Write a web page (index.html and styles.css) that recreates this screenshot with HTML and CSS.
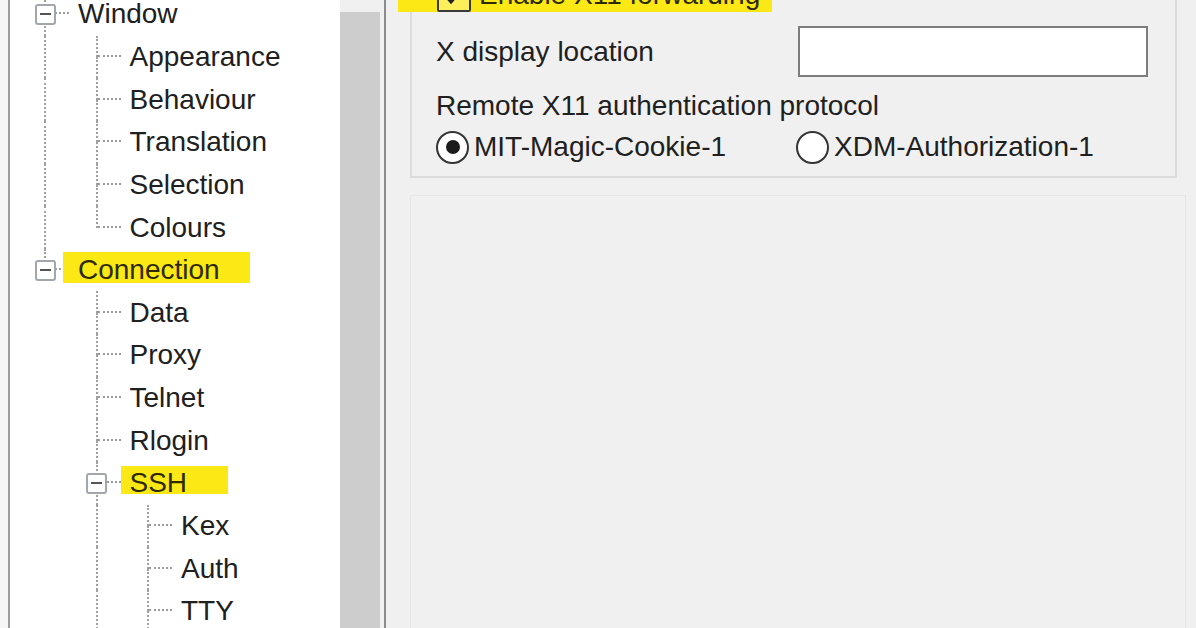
FILE: index.html
```html
<!DOCTYPE html>
<html>
<head>
<meta charset="utf-8">
<title>PuTTY Configuration - X11</title>
<link rel="stylesheet" href="styles.css">
</head>
<body>
<div class="dialog">
  <div class="edge"></div>
  <div class="tree-box">
    <div class="tree">
      <div class="row">
        <div class="conn"><i class="q-tl"></i><i class="q-bl"></i><i class="q-tr"></i><b class="exp"></b></div>
        <span class="label">Window</span>
      </div>
      <div class="row">
        <div class="indent on"></div>
        <div class="conn"><i class="q-tl"></i><i class="q-bl"></i><i class="q-tr"></i></div>
        <span class="label">Appearance</span>
      </div>
      <div class="row">
        <div class="indent on"></div>
        <div class="conn"><i class="q-tl"></i><i class="q-bl"></i><i class="q-tr"></i></div>
        <span class="label">Behaviour</span>
      </div>
      <div class="row">
        <div class="indent on"></div>
        <div class="conn"><i class="q-tl"></i><i class="q-bl"></i><i class="q-tr"></i></div>
        <span class="label">Translation</span>
      </div>
      <div class="row">
        <div class="indent on"></div>
        <div class="conn"><i class="q-tl"></i><i class="q-bl"></i><i class="q-tr"></i></div>
        <span class="label">Selection</span>
      </div>
      <div class="row">
        <div class="indent on"></div>
        <div class="conn"><i class="q-tl"></i><i class="q-tr"></i></div>
        <span class="label">Colours</span>
      </div>
      <div class="row">
        <div class="conn"><i class="q-tl"></i><i class="q-tr"></i><b class="exp"></b></div>
        <span class="label hl hl-conn">Connection</span>
      </div>
      <div class="row">
        <div class="indent"></div>
        <div class="conn"><i class="q-tl"></i><i class="q-bl"></i><i class="q-tr"></i></div>
        <span class="label">Data</span>
      </div>
      <div class="row">
        <div class="indent"></div>
        <div class="conn"><i class="q-tl"></i><i class="q-bl"></i><i class="q-tr"></i></div>
        <span class="label">Proxy</span>
      </div>
      <div class="row">
        <div class="indent"></div>
        <div class="conn"><i class="q-tl"></i><i class="q-bl"></i><i class="q-tr"></i></div>
        <span class="label">Telnet</span>
      </div>
      <div class="row">
        <div class="indent"></div>
        <div class="conn"><i class="q-tl"></i><i class="q-bl"></i><i class="q-tr"></i></div>
        <span class="label">Rlogin</span>
      </div>
      <div class="row">
        <div class="indent"></div>
        <div class="conn"><i class="q-tl"></i><i class="q-bl"></i><i class="q-tr"></i><b class="exp"></b></div>
        <span class="label hl hl-ssh">SSH</span>
      </div>
      <div class="row">
        <div class="indent"></div>
        <div class="indent on"></div>
        <div class="conn"><i class="q-tl"></i><i class="q-bl"></i><i class="q-tr"></i></div>
        <span class="label">Kex</span>
      </div>
      <div class="row">
        <div class="indent"></div>
        <div class="indent on"></div>
        <div class="conn"><i class="q-tl"></i><i class="q-bl"></i><i class="q-tr"></i></div>
        <span class="label">Auth</span>
      </div>
      <div class="row">
        <div class="indent"></div>
        <div class="indent on"></div>
        <div class="conn"><i class="q-tl"></i><i class="q-bl"></i><i class="q-tr"></i></div>
        <span class="label">TTY</span>
      </div>
      <div class="row">
        <div class="indent"></div>
        <div class="indent on"></div>
        <div class="conn"><i class="q-tl"></i><i class="q-bl"></i><i class="q-tr"></i></div>
        <span class="label hl hl-x11row">X11</span>
      </div>
    </div>
    <div class="scrollbar"><div class="thumb"></div></div>
  </div>
  <div class="panel">
    <div class="group">
      <div class="row-check">
        <label class="hl hl-x11">
          <span class="checkbox"><svg width="30" height="30" viewBox="0 0 30 30"><path d="M6 15 L12 22 L24 8" fill="none" stroke="#222" stroke-width="3"/></svg></span>
          <span>Enable X11 forwarding</span>
        </label>
      </div>
      <div class="row-display">
        <span>X display location</span>
        <span class="input"></span>
      </div>
      <div class="row-label">Remote X11 authentication protocol</div>
      <div class="row-radios">
        <span class="opt first"><span class="radio on"></span>MIT-Magic-Cookie-1</span>
        <span class="opt"><span class="radio"></span>XDM-Authorization-1</span>
      </div>
    </div>
    <div class="group2"></div>
  </div>
</div>
</body>
</html>
```

FILE: styles.css
```css
html, body {
  margin: 0;
  padding: 0;
}

body {
  background: #f5f5f5;
  font-family: "Liberation Sans", Arial, sans-serif;
  font-size: 28px;
  color: #202020;
  overflow: hidden;
}

.dialog {
  display: flex;
  height: 628px;
  overflow: hidden;
}

.edge {
  width: 8px;
  flex: none;
  background: #f6f6f6;
}

/* tree view */
.tree-box {
  flex: none;
  display: flex;
  width: 378px;
  box-sizing: border-box;
  border-left: 2px solid #9c9c9c;
  border-right: 2px solid #8c8c8c;
  background: #fff;
}

.tree {
  width: 330px;
  flex: none;
  box-sizing: border-box;
  padding-left: 13px;
  margin-top: -7px;
}

.row {
  display: flex;
  height: 42.65px;
}

.indent {
  width: 51.5px;
  flex: none;
  display: flex;
}

.indent.on::before {
  content: "";
  width: 23px;
  box-sizing: border-box;
  border-right: 2px dotted #a0a0a0;
}

.conn {
  flex: none;
  width: 55px;
  display: grid;
  grid-template-columns: 23px 23px 9px;
  grid-template-rows: 1fr 1fr;
}

.conn i {
  display: block;
  box-sizing: border-box;
}

.q-tl {
  grid-area: 1 / 1;
  border-right: 2px dotted #a0a0a0;
}

.q-bl {
  grid-area: 2 / 1;
  border-right: 2px dotted #a0a0a0;
}

.q-tr {
  grid-area: 1 / 2;
  border-bottom: 2px dotted #9a9a9a;
}

.exp {
  grid-area: 1 / 1 / 3 / 3;
  place-self: center;
  margin-right: 2px;
  width: 21px;
  height: 21px;
  box-sizing: border-box;
  border: 2px solid #a2a6ad;
  border-radius: 3px;
  background: #fff;
  display: flex;
  align-items: center;
  justify-content: center;
}

.exp::after {
  content: "";
  width: 11px;
  height: 2px;
  background: #555;
}

.label {
  display: flex;
  align-items: center;
  white-space: nowrap;
}

.hl {
  background: #fbe814;
  color: #2e2a00;
}

.hl-conn {
  align-self: center;
  height: 31px;
  box-sizing: border-box;
  margin: 0 0 5px -15px;
  padding: 5px 30px 0 15px;
}

.hl-ssh {
  align-self: center;
  height: 28px;
  box-sizing: border-box;
  margin: 0 0 6px -9px;
  padding: 6px 41px 0 9px;
}

.hl-x11row {
  align-self: center;
  height: 40px;
  margin-left: -8px;
  padding: 0 40px 0 8px;
}

.scrollbar {
  width: 44px;
  flex: none;
  box-sizing: border-box;
  padding-top: 12px;
  background: #f0f0f0;
}

.thumb {
  width: 40px;
  height: 100%;
  background: #cdcdcd;
}

/* settings panel */
.panel {
  flex: 1;
  display: flex;
  flex-direction: column;
  background: #f0f0f0;
  padding: 0 19px 0 24px;
}

.group {
  margin-top: -26px;
  border: 2px solid #dcdcdc;
  border-top: none;
  padding: 0 27px 12px 24px;
}

.row-check {
  height: 42px;
  display: flex;
  align-items: center;
}

.hl-x11 {
  display: flex;
  align-items: center;
  gap: 8px;
  height: 34px;
  width: 374px;
  box-sizing: border-box;
  margin-left: -38px;
  padding-left: 39px;
  white-space: nowrap;
}

.checkbox {
  width: 34px;
  height: 34px;
  flex: none;
  box-sizing: border-box;
  border: 2px solid #3a3a3a;
  border-radius: 2px;
  background: rgba(255, 255, 255, 0.3);
  display: flex;
  align-items: center;
  justify-content: center;
}

.row-display {
  display: flex;
  justify-content: space-between;
  align-items: center;
  margin-top: 10px;
  height: 51px;
}

.input {
  width: 350px;
  height: 51px;
  box-sizing: border-box;
  border: 2px solid #7d7d7d;
  background: #fff;
}

.row-label {
  margin-top: 12px;
  line-height: 34px;
}

.row-radios {
  margin-top: 7px;
  height: 34px;
  display: flex;
  align-items: center;
}

.opt {
  display: flex;
  align-items: center;
  gap: 5px;
  white-space: nowrap;
}

.opt.first {
  width: 360px;
}

.radio {
  width: 33px;
  height: 33px;
  flex: none;
  box-sizing: border-box;
  border-radius: 50%;
  border: 2.5px solid #333;
  background: #fff;
  display: flex;
  align-items: center;
  justify-content: center;
}

.radio.on::after {
  content: "";
  width: 14px;
  height: 14px;
  border-radius: 50%;
  background: #1c1c1c;
}

.group2 {
  flex: 1;
  margin: 17px -9px 0 0;
  border: 1px solid #e6e6e6;
  border-bottom: none;
}
```
